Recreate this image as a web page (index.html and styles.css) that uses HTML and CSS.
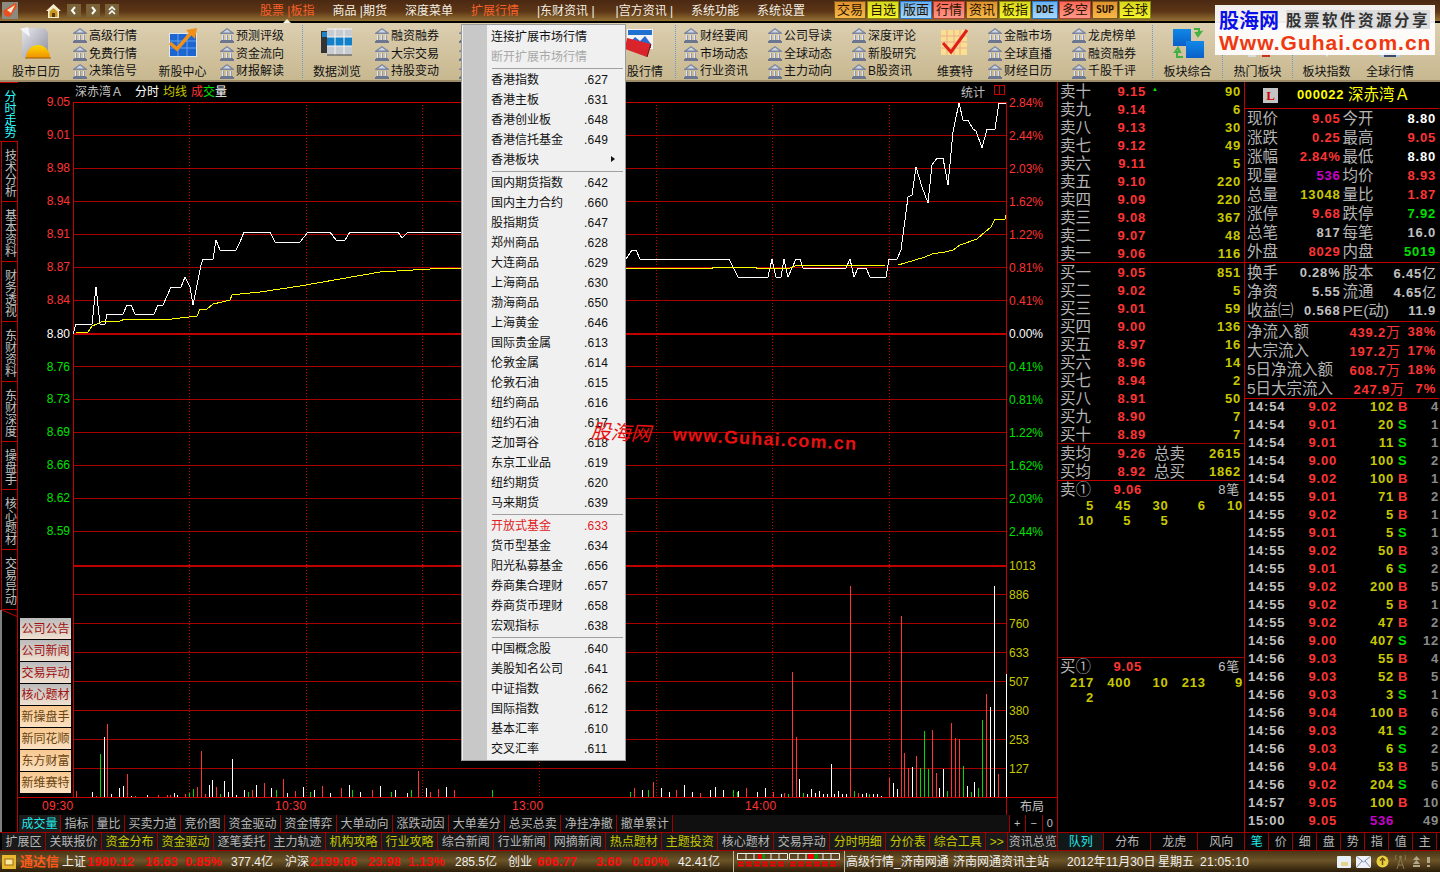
FILE: index.html
```html
<!DOCTYPE html>
<html lang="zh-CN">
<head>
<meta charset="utf-8">
<title>通达信</title>
<link rel="stylesheet" href="styles.css">
</head>
<body>
<svg class="defs" width="0" height="0" aria-hidden="true">
  <symbol id="bank" viewBox="0 0 14 15">
    <path d="M7 0L14 5V6H0V5z" fill="#7c86a0"/>
    <path d="M7 1.500L11 4.500H3z" fill="#cfd6e4"/>
    <path d="M2 7h2v5H2zM6 7h2v5H6zM10 7h2v5h-2z" fill="#8f98ae"/>
    <path d="M2 7h1v5H2zM6 7h1v5H6zM10 7h1v5h-1z" fill="#e2e6ee"/>
    <path d="M1 12h12v1H1zM0 13h14v2H0z" fill="#6c7690"/>
  </symbol>
</svg>
<div class="app">
  <header class="topbar">
    <div class="tb-left">
      <svg class="tb-logo" width="16" height="17" viewBox="0 0 16 17"><rect width="16" height="17" fill="#8a8a80"/><path d="M1 9L13 1L15 4L8 15L3 14z" fill="#e8501c"/><path d="M5 8L13 3L9 11z" fill="#f8e8d0"/></svg>
      <svg class="tb-home" width="15" height="16" viewBox="0 0 15 16"><path d="M7.500 1L15 8H13V15H2V8H0z" fill="#f4ecd0"/><path d="M3.500 8.500L7.500 5L11.500 8.500V14H3.500z" fill="#c89820"/><rect x="6" y="10" width="3" height="4" fill="#5a3a10"/></svg>
      <span class="tb-nav"><svg width="14" height="13" viewBox="0 0 14 13"><path d="M8 3L5 6.500L8 10" fill="none" stroke="#fff" stroke-width="2"/></svg></span>
      <span class="tb-nav"><svg width="14" height="13" viewBox="0 0 14 13"><path d="M6 3L9 6.500L6 10" fill="none" stroke="#fff" stroke-width="2"/></svg></span>
      <span class="tb-nav"><svg width="14" height="13" viewBox="0 0 14 13"><path d="M4 6L7 3L10 6M4 10L7 7L10 10" fill="none" stroke="#fff" stroke-width="1.600"/></svg></span>
    </div>
    <nav class="tb-menu">
      <span class="hot">股票 |板指</span><span>商品 |期货</span><span>深度菜单</span><span class="hot">扩展行情</span><span>|东财资讯 |</span><span class="wide">|宫方资讯 |</span><span>系统功能</span><span>系统设置</span>
    </nav>
    <div class="quick">
      <span class="q amber">交易</span><span class="q yellow">自选</span><span class="q blue">版面</span><span class="q pink">行情</span><span class="q amber">资讯</span><span class="q yellow">板指</span><span class="q blue nar">DDE</span><span class="q pink">多空</span><span class="q amber nar">SUP</span><span class="q yellow">全球</span>
    </div>
  </header>

  <section class="ribbon">
    <div class="big b72">
      <svg width="32" height="32" viewBox="0 0 32 32"><defs><linearGradient id="cal" x1="0" y1="0" x2="1" y2="1"><stop offset="0" stop-color="#e8e8ee"/><stop offset="1" stop-color="#8f8f9c"/></linearGradient><linearGradient id="sun" x1="0" y1="0" x2="0" y2="1"><stop offset="0" stop-color="#ffd800"/><stop offset="1" stop-color="#f09000"/></linearGradient></defs><path d="M2 1H24L28 5V30H2z" fill="url(#cal)"/><path d="M0 2L8 0L10 10z" fill="#f4f4f8"/><path d="M6 31A12 13 0 0 1 30 31z" fill="url(#sun)"/><path d="M5 31H31" stroke="#a05a00"/></svg>
      <span>股市日历</span>
    </div>
    <div class="list b74"><span><svg class="bk"><use href="#bank"/></svg>高级行情</span><span><svg class="bk"><use href="#bank"/></svg>免费行情</span><span><svg class="bk"><use href="#bank"/></svg>决策信号</span></div>
    <div class="big b73">
      <svg width="32" height="32" viewBox="0 0 32 32"><rect x="2" y="6" width="28" height="24" fill="#e6e6e6"/><rect x="3" y="7" width="26" height="22" fill="#1d66d0"/><path d="M3 14H29M3 21H29M11 7V29M20 7V29" stroke="#66a0ee"/><path d="M3 16L10 22L24 6" fill="none" stroke="#f09018" stroke-width="3.500"/><path d="M19 3L30 1L28 12z" fill="#f09018"/></svg>
      <span>新股中心</span>
    </div>
    <div class="list b83"><span><svg class="bk"><use href="#bank"/></svg>预测评级</span><span><svg class="bk"><use href="#bank"/></svg>资金流向</span><span><svg class="bk"><use href="#bank"/></svg>财报解读</span></div>
    <i class="rsep"></i>
    <div class="big b68">
      <svg width="32" height="32" viewBox="0 0 32 32"><rect x="0" y="4" width="14" height="22" fill="#333"/><rect x="1" y="5" width="12" height="5" fill="#2080c8"/><rect x="6" y="2" width="25" height="26" fill="#c8ccd0"/><path d="M6 10H31V19H6z" fill="#1180c8"/><path d="M6 2H31M6 10H31M6 19H31M14 2V28M23 2V28" stroke="#f4f4f4"/><path d="M6 28H31" stroke="#444"/></svg>
      <span>数据浏览</span>
    </div>
    <div class="list b84 push3"><span><svg class="bk"><use href="#bank"/></svg>融资融券</span><span><svg class="bk"><use href="#bank"/></svg>大宗交易</span><span><svg class="bk"><use href="#bank"/></svg>持股变动</span></div>
    <div class="list b145"><span><svg class="bk"><use href="#bank"/></svg></span><span><svg class="bk"><use href="#bank"/></svg></span><span><svg class="bk"><use href="#bank"/></svg></span></div>
    <div class="big b72">
      <svg width="32" height="32" viewBox="0 0 32 32"><rect x="4" y="2" width="26" height="20" fill="#f4f4f4"/><rect x="5" y="3" width="24" height="5" fill="#2070d0"/><path d="M5 18L12 10L17 14L22 9L28 17V21H5z" fill="#2a6ad0"/><path d="M4 11L28 17L24 30L2 22z" fill="#d8242a"/><path d="M28 17L24 30" stroke="#6a1010"/></svg>
      <span class="clip-l">股行情</span>
    </div>
    <i class="rsep"></i>
    <div class="list b84 push7"><span><svg class="bk"><use href="#bank"/></svg>财经要闻</span><span><svg class="bk"><use href="#bank"/></svg>市场动态</span><span><svg class="bk"><use href="#bank"/></svg>行业资讯</span></div>
    <div class="list b84"><span><svg class="bk"><use href="#bank"/></svg>公司导读</span><span><svg class="bk"><use href="#bank"/></svg>全球动态</span><span><svg class="bk"><use href="#bank"/></svg>主力动向</span></div>
    <div class="list b84"><span><svg class="bk"><use href="#bank"/></svg>深度评论</span><span><svg class="bk"><use href="#bank"/></svg>新股研究</span><span><svg class="bk"><use href="#bank"/></svg>B股资讯</span></div>
    <div class="big b40">
      <svg width="30" height="32" viewBox="0 0 30 32"><rect x="1" y="3" width="26" height="25" fill="#f8e090"/><path d="M1 9H27M1 15H27M1 21H27M7 3V28M14 3V28M20 3V28" stroke="#f0a890"/><path d="M3 16L11 25L27 3" fill="none" stroke="#e02018" stroke-width="3"/></svg>
      <span>维赛特</span>
    </div>
    <div class="list b84 push12"><span><svg class="bk"><use href="#bank"/></svg>金融市场</span><span><svg class="bk"><use href="#bank"/></svg>全球直播</span><span><svg class="bk"><use href="#bank"/></svg>财经日历</span></div>
    <div class="list b81"><span><svg class="bk"><use href="#bank"/></svg>龙虎榜单</span><span><svg class="bk"><use href="#bank"/></svg>融资融券</span><span><svg class="bk"><use href="#bank"/></svg>千股千评</span></div>
    <i class="rsep"></i>
    <div class="big b69">
      <svg width="32" height="32" viewBox="0 0 32 32"><defs><linearGradient id="sq" x1="0" y1="0" x2="0" y2="1"><stop offset="0" stop-color="#1088e8"/><stop offset="1" stop-color="#0a60c8"/></linearGradient></defs><rect x="1" y="2" width="18" height="17" fill="url(#sq)"/><rect x="14" y="14" width="18" height="17" fill="url(#sq)"/><path d="M22 2H27V6M29 5L26 9L24 6zM11 30H5V24M3 25L6 21L8 25z" fill="none" stroke="#40b040" stroke-width="2"/></svg>
      <span>板块综合</span>
    </div>
    <i class="rsep"></i>
    <div class="big b69">
      <svg width="32" height="32" viewBox="0 0 32 32"><rect x="6" y="24" width="8" height="6" fill="#dcdcdc"/><rect x="20" y="24" width="8" height="6" fill="#c83020"/></svg>
      <span>热门板块</span>
    </div>
    <i class="rsep"></i>
    <div class="big b67">
      <svg width="32" height="32" viewBox="0 0 32 32"><path d="M12 24H20L16 30z" fill="#e0e4ec"/></svg>
      <span>板块指数</span>
    </div>
    <div class="big b60">
      <svg width="32" height="32" viewBox="0 0 32 32"><path d="M6 24H26V30H6z" fill="#b8d0e4"/><path d="M10 26H22V30H10z" fill="#3a4a68"/></svg>
      <span>全球行情</span>
    </div>
  </section>

  <main class="main">
    <aside class="rail">
      <div class="vt on h60"><span>分时走势</span></div>
      <div class="vt h60"><span>技术分析</span></div>
      <div class="vt h60"><span>基本资料</span></div>
      <div class="vt h60"><span>财务透视</span></div>
      <div class="vt h60"><span>东财资料</span></div>
      <div class="vt h60"><span>东财深度</span></div>
      <div class="vt h48"><span>操盘手</span></div>
      <div class="vt h60"><span>核心题材</span></div>
      <div class="vt h60"><span>交易异动</span></div>
      <div class="rail-rest"><svg width="16" height="8" viewBox="0 0 16 8"><path d="M0 0L16 7" stroke="#c00000"/></svg></div>
    </aside>

    <section class="chartcol">
      <svg class="chart" viewBox="18 82 1040 733" width="1040" height="733">
        <g class="grid">
          <path d="M73 135.500H1006M73 168.500H1006M73 201.500H1006M73 234.500H1006M73 267.500H1006M73 300.500H1006M73 366.500H1006M73 399.500H1006M73 432.500H1006M73 465.500H1006M73 498.500H1006M73 531.500H1006M73 594.500H1006M73 623.500H1006M73 652.500H1006M73 681.500H1006M73 710.500H1006M73 739.500H1006M73 768.500H1006"/>
          <path class="bright" d="M73 102.500H1006M18 797.500H1057M18 815H1057M73.500 102V797M1006.500 102V815"/>
          <path class="thick" d="M73 333.500H1006M73 565.500H1006"/>
          <path class="dots" d="M189.500 102V797M306.500 102V797M422.500 102V797M539.500 102V797M656.500 102V797M772.500 102V797M889.500 102V797"/>
        </g>
        <polyline class="pline" points="73,334 76,324 92,324 96,287 100,324 105,324 107,314 123,314 127,305 131,305 135,314 154,314 158,305 163,305 171,287 181,287 185,277 190,287 193,305 201,265 203,259 213,259 216,240 220,250 236,250 240,242 244,232 270,232 275,242 300,242 308,232 330,232 336,240 345,240 350,232 398,232 402,238 408,232 462,232"/>
        <polyline class="pline" points="626,259 632,250 636,250 640,259 729,259 738,277 768,277 772,259 776,277 781,277 784,259 788,277 796,259 800,259 803,268 846,268 850,259 854,277 858,268 866,268 870,277 886,277 889,259 897,259 901,250 903,235 908,197 912,195 916,167 922,187 928,203 932,165 937,158 943,158 948,185 953,132 959,103 963,120 968,120 973,129 976,131 982,148 987,129 995,129 999,103 1006,103"/>
        <polyline class="aline" points="76,332 88,332 92,326 97,324 101,322 120,321 125,319 172,319 197,316 200,309 207,309 213,304 222,302 230,300 232,295 240,294 260,292 300,286 340,279 380,272 430,269 462,268"/>
        <polyline class="aline" points="626,268 712,268 712,267 756,267 756,268 790,268 795,266 886,265 898,265 905,263 915,260 925,257 932,254 945,252 953,250 960,245 977,239 985,232 991,227 995,219 1005,219 1006,215"/>
        <g transform="translate(.5,0)">
          <path class="vr" d="M76 797V791M96 797V796M107 797V724M127 797V774M158 797V795M167 797V795M170 797V795M185 797V794M197 797V787M201 797V751M205 797V794M216 797V787M252 797V790M264 797V783M283 797V779M295 797V791M322 797V786M341 797V788M372 797V790M418 797V771M430 797V792M438 797V789M454 797V790M634 797V788M653 797V782M676 797V790M700 797V793M746 797V788M773 797V792M784 797V793M792 797V672M796 797V737M850 797V586M858 797V793M889 797V778M901 797V616M904 797V753M908 797V768M916 797V756M932 797V730M936 797V773M951 797V723M955 797V738M959 797V739M986 797V694M998 797V774"/>
          <path class="vw" d="M92 797V792M104 797V737M111 797V794M119 797V788M123 797V786M131 797V796M147 797V795M174 797V793M177 797V795M209 797V785M212 797V780M224 797V781M228 797V792M232 797V759M236 797V795M244 797V790M256 797V785M271 797V788M287 797V793M303 797V787M314 797V790M330 797V793M349 797V785M360 797V792M380 797V786M395 797V790M407 797V793M426 797V788M446 797V787M642 797V790M661 797V788M669 797V792M684 797V785M692 797V792M710 797V790M715 797V787M723 797V790M738 797V791M757 797V792M765 797V788M781 797V794M799 797V779M807 797V794M811 797V789M815 797V793M819 797V791M823 797V794M827 797V794M831 797V764M834 797V794M838 797V791M842 797V794M846 797V794M862 797V794M866 797V793M873 797V794M877 797V794M881 797V796M893 797V783M897 797V789M912 797V767M939 797V788M943 797V769M967 797V786M974 797V782M990 797V707M994 797V586M1006 797V674"/>
          <path class="vg" d="M100 797V754M135 797V796M189 797V793M193 797V789M220 797V794M248 797V792M276 797V790M310 797V792M352 797V790M391 797V792M411 797V790M492 797V790M630 797V792M648 797V790M733 797V790M737 797V792M788 797V794M803 797V793M854 797V791M869 797V794M920 797V768M924 797V731M928 797V769M947 797V791M963 797V766M971 797V792M978 797V788M982 797V720"/>
        </g>
        <g class="ax red">
          <text x="70" y="106">9.05</text><text x="70" y="139">9.01</text><text x="70" y="172">8.98</text><text x="70" y="205">8.94</text><text x="70" y="238">8.91</text><text x="70" y="271">8.87</text><text x="70" y="304">8.84</text>
        </g>
        <text class="ax white" x="70" y="338">8.80</text>
        <g class="ax green">
          <text x="70" y="371">8.76</text><text x="70" y="403">8.73</text><text x="70" y="436">8.69</text><text x="70" y="469">8.66</text><text x="70" y="502">8.62</text><text x="70" y="535">8.59</text>
        </g>
        <g class="axr red">
          <text x="1009" y="107">2.84%</text><text x="1009" y="140">2.44%</text><text x="1009" y="173">2.03%</text><text x="1009" y="206">1.62%</text><text x="1009" y="239">1.22%</text><text x="1009" y="272">0.81%</text><text x="1009" y="305">0.41%</text>
        </g>
        <text class="axr white" x="1009" y="338">0.00%</text>
        <g class="axr green">
          <text x="1009" y="371">0.41%</text><text x="1009" y="404">0.81%</text><text x="1009" y="437">1.22%</text><text x="1009" y="470">1.62%</text><text x="1009" y="503">2.03%</text><text x="1009" y="536">2.44%</text>
        </g>
        <g class="axr yel">
          <text x="1009" y="570">1013</text><text x="1009" y="599">886</text><text x="1009" y="628">760</text><text x="1009" y="657">633</text><text x="1009" y="686">507</text><text x="1009" y="715">380</text><text x="1009" y="744">253</text><text x="1009" y="773">127</text>
        </g>
        <g class="axt red">
          <text x="42" y="810">09:30</text><text x="275" y="810">10:30</text><text x="512" y="810">13:00</text><text x="745" y="810">14:00</text>
        </g>
        <text class="zh grey" x="75" y="96">深赤湾Ａ</text>
        <text class="zh white" x="135" y="96">分时</text>
        <text class="zh yel" x="163" y="96">均线</text>
        <text class="zh red" x="191" y="96">成</text>
        <text class="zh green" x="203" y="96">交</text>
        <text class="zh white" x="215" y="96">量</text>
        <text class="zh grey" x="961" y="97">统计</text>
        <path class="bright" d="M994.500 85.500H1004.500V94.500H994.500zM999.500 85V95"/>
        <text class="zh grey" x="1020" y="811">布局</text>
      </svg>
      <div class="side-btns">
        <span class="sb cool">公司公告</span><span class="sb cool">公司新闻</span><span class="sb cool">交易异动</span><span class="sb cool">核心题材</span>
        <span class="sb warm">新操盘手</span><span class="sb warm">新同花顺</span><span class="sb warm">东方财富</span><span class="sb warm">新维赛特</span>
      </div>
      <div class="tabs1">
        <span class="tab act first">成交量</span><span class="tab">指标</span><span class="tab">量比</span><span class="tab">买卖力道</span><span class="tab">竞价图</span><span class="tab">资金驱动</span><span class="tab">资金博弈</span><span class="tab">大单动向</span><span class="tab">涨跌动因</span><span class="tab">大单差分</span><span class="tab">总买总卖</span><span class="tab">净挂净撤</span><span class="tab">撤单累计</span>
        <span class="tabs-gap"></span>
        <span class="mini">+</span><span class="mini">−</span><span class="mini">0</span>
      </div>
    </section>

    <section class="book">
      <div class="brow"><span class="lb">卖十</span><span class="n red">9.15</span><span class="up">▲</span><span class="n yel">90</span></div>
      <div class="brow"><span class="lb">卖九</span><span class="n red">9.14</span><span></span><span class="n yel">6</span></div>
      <div class="brow"><span class="lb">卖八</span><span class="n red">9.13</span><span></span><span class="n yel">30</span></div>
      <div class="brow"><span class="lb">卖七</span><span class="n red">9.12</span><span></span><span class="n yel">49</span></div>
      <div class="brow"><span class="lb">卖六</span><span class="n red">9.11</span><span></span><span class="n yel">5</span></div>
      <div class="brow"><span class="lb">卖五</span><span class="n red">9.10</span><span></span><span class="n yel">220</span></div>
      <div class="brow"><span class="lb">卖四</span><span class="n red">9.09</span><span></span><span class="n yel">220</span></div>
      <div class="brow"><span class="lb">卖三</span><span class="n red">9.08</span><span></span><span class="n yel">367</span></div>
      <div class="brow"><span class="lb">卖二</span><span class="n red">9.07</span><span></span><span class="n yel">48</span></div>
      <div class="brow"><span class="lb">卖一</span><span class="n red">9.06</span><span></span><span class="n yel">116</span></div>
      <div class="hr"></div>
      <div class="brow"><span class="lb">买一</span><span class="n red">9.05</span><span></span><span class="n yel">851</span></div>
      <div class="brow"><span class="lb">买二</span><span class="n red">9.02</span><span></span><span class="n yel">5</span></div>
      <div class="brow"><span class="lb">买三</span><span class="n red">9.01</span><span></span><span class="n yel">59</span></div>
      <div class="brow"><span class="lb">买四</span><span class="n red">9.00</span><span></span><span class="n yel">136</span></div>
      <div class="brow"><span class="lb">买五</span><span class="n red">8.97</span><span></span><span class="n yel">16</span></div>
      <div class="brow"><span class="lb">买六</span><span class="n red">8.96</span><span></span><span class="n yel">14</span></div>
      <div class="brow"><span class="lb">买七</span><span class="n red">8.94</span><span></span><span class="n yel">2</span></div>
      <div class="brow"><span class="lb">买八</span><span class="n red">8.91</span><span></span><span class="n yel">50</span></div>
      <div class="brow"><span class="lb">买九</span><span class="n red">8.90</span><span></span><span class="n yel">7</span></div>
      <div class="brow"><span class="lb">买十</span><span class="n red">8.89</span><span></span><span class="n yel">7</span></div>
      <div class="hr grey-hr"></div>
      <div class="avg"><span class="lb">卖均</span><span class="n red">9.26</span><span class="lb">总卖</span><span class="n yel">2615</span></div>
      <div class="avg"><span class="lb">买均</span><span class="n red">8.92</span><span class="lb">总买</span><span class="n yel">1862</span></div>
      <div class="hr"></div>
      <div class="qhead"><span class="lb">卖①</span><span class="n red">9.06</span><span class="n grey cnt">8笔</span></div>
      <div class="queue">
        <span class="n yel">5</span><span class="n yel">45</span><span class="n yel">30</span><span class="n yel">6</span><span class="n yel">10</span>
        <span class="n yel">10</span><span class="n yel">5</span><span class="n yel">5</span>
      </div>
      <div class="qspace"></div>
      <div class="hr grey-hr"></div>
      <div class="qhead"><span class="lb">买①</span><span class="n red">9.05</span><span class="n grey cnt">6笔</span></div>
      <div class="queue">
        <span class="n yel">217</span><span class="n yel">400</span><span class="n yel">10</span><span class="n yel">213</span><span class="n yel">9</span>
        <span class="n yel">2</span>
      </div>
    </section>

    <section class="info">
      <div class="ihead"><span class="lbox">L</span><span class="n code">000022</span><span class="iname">深赤湾Ａ</span></div>
      <div class="irow"><div class="half"><span class="lb">现价</span><span class="n red">9.05</span></div><div class="half"><span class="lb">今开</span><span class="n white">8.80</span></div></div>
      <div class="irow"><div class="half"><span class="lb">涨跌</span><span class="n red">0.25</span></div><div class="half"><span class="lb">最高</span><span class="n red">9.05</span></div></div>
      <div class="irow"><div class="half"><span class="lb">涨幅</span><span class="n red">2.84%</span></div><div class="half"><span class="lb">最低</span><span class="n white">8.80</span></div></div>
      <div class="irow"><div class="half"><span class="lb">现量</span><span class="n mag">536</span></div><div class="half"><span class="lb">均价</span><span class="n red">8.93</span></div></div>
      <div class="irow"><div class="half"><span class="lb">总量</span><span class="n yel">13048</span></div><div class="half"><span class="lb">量比</span><span class="n red">1.87</span></div></div>
      <div class="irow"><div class="half"><span class="lb">涨停</span><span class="n red">9.68</span></div><div class="half"><span class="lb">跌停</span><span class="n green">7.92</span></div></div>
      <div class="irow"><div class="half"><span class="lb">总笔</span><span class="n grey">817</span></div><div class="half"><span class="lb">每笔</span><span class="n grey">16.0</span></div></div>
      <div class="irow"><div class="half"><span class="lb">外盘</span><span class="n red">8029</span></div><div class="half"><span class="lb">内盘</span><span class="n green">5019</span></div></div>
      <div class="hr gap1"></div>
      <div class="irow"><div class="half"><span class="lb">换手</span><span class="n grey">0.28%</span></div><div class="half"><span class="lb">股本</span><span class="n grey">6.45<i class="u">亿</i></span></div></div>
      <div class="irow"><div class="half"><span class="lb">净资</span><span class="n grey">5.55</span></div><div class="half"><span class="lb">流通</span><span class="n grey">4.65<i class="u">亿</i></span></div></div>
      <div class="irow"><div class="half"><span class="lb">收益㈢</span><span class="n grey">0.568</span></div><div class="half"><span class="lb">PE(动)</span><span class="n grey">11.9</span></div></div>
      <div class="hr gap1"></div>
      <div class="frow"><span class="lb">净流入额</span><span class="n red fv">439.2<i class="u">万</i></span><span class="n red fp">38%</span></div>
      <div class="frow"><span class="lb">大宗流入</span><span class="n red fv">197.2<i class="u">万</i></span><span class="n red fp">17%</span></div>
      <div class="frow"><span class="lb">5日净流入额</span><span class="n red fv">608.7<i class="u">万</i></span><span class="n red fp">18%</span></div>
      <div class="frow"><span class="lb">5日大宗流入</span><span class="n red fv nudge">247.9<i class="u">万</i></span><span class="n red fp">7%</span></div>
      <div class="hr"></div>
      <div class="ticks">
        <div class="tick"><span class="n grey">14:54</span><span class="n red">9.02</span><span class="n yel">102</span><span class="n red bs">B</span><span class="n dim">4</span></div>
        <div class="tick"><span class="n grey">14:54</span><span class="n red">9.01</span><span class="n yel">20</span><span class="n green bs">S</span><span class="n dim">1</span></div>
        <div class="tick"><span class="n grey">14:54</span><span class="n red">9.01</span><span class="n yel">11</span><span class="n green bs">S</span><span class="n dim">1</span></div>
        <div class="tick"><span class="n grey">14:54</span><span class="n red">9.00</span><span class="n yel">100</span><span class="n green bs">S</span><span class="n dim">2</span></div>
        <div class="tick"><span class="n grey">14:54</span><span class="n red">9.02</span><span class="n yel">100</span><span class="n red bs">B</span><span class="n dim">1</span></div>
        <div class="tick"><span class="n grey">14:55</span><span class="n red">9.01</span><span class="n yel">71</span><span class="n red bs">B</span><span class="n dim">2</span></div>
        <div class="tick"><span class="n grey">14:55</span><span class="n red">9.02</span><span class="n yel">5</span><span class="n red bs">B</span><span class="n dim">1</span></div>
        <div class="tick"><span class="n grey">14:55</span><span class="n red">9.01</span><span class="n yel">5</span><span class="n green bs">S</span><span class="n dim">1</span></div>
        <div class="tick"><span class="n grey">14:55</span><span class="n red">9.02</span><span class="n yel">50</span><span class="n red bs">B</span><span class="n dim">3</span></div>
        <div class="tick"><span class="n grey">14:55</span><span class="n red">9.01</span><span class="n yel">6</span><span class="n green bs">S</span><span class="n dim">2</span></div>
        <div class="tick"><span class="n grey">14:55</span><span class="n red">9.02</span><span class="n yel">200</span><span class="n red bs">B</span><span class="n dim">5</span></div>
        <div class="tick"><span class="n grey">14:55</span><span class="n red">9.02</span><span class="n yel">5</span><span class="n red bs">B</span><span class="n dim">1</span></div>
        <div class="tick"><span class="n grey">14:55</span><span class="n red">9.02</span><span class="n yel">47</span><span class="n red bs">B</span><span class="n dim">2</span></div>
        <div class="tick"><span class="n grey">14:56</span><span class="n red">9.00</span><span class="n yel">407</span><span class="n green bs">S</span><span class="n dim">12</span></div>
        <div class="tick"><span class="n grey">14:56</span><span class="n red">9.03</span><span class="n yel">55</span><span class="n red bs">B</span><span class="n dim">4</span></div>
        <div class="tick"><span class="n grey">14:56</span><span class="n red">9.03</span><span class="n yel">52</span><span class="n red bs">B</span><span class="n dim">5</span></div>
        <div class="tick"><span class="n grey">14:56</span><span class="n red">9.03</span><span class="n yel">3</span><span class="n green bs">S</span><span class="n dim">1</span></div>
        <div class="tick"><span class="n grey">14:56</span><span class="n red">9.04</span><span class="n yel">100</span><span class="n red bs">B</span><span class="n dim">6</span></div>
        <div class="tick"><span class="n grey">14:56</span><span class="n red">9.03</span><span class="n yel">41</span><span class="n green bs">S</span><span class="n dim">2</span></div>
        <div class="tick"><span class="n grey">14:56</span><span class="n red">9.03</span><span class="n yel">6</span><span class="n green bs">S</span><span class="n dim">2</span></div>
        <div class="tick"><span class="n grey">14:56</span><span class="n red">9.04</span><span class="n yel">53</span><span class="n red bs">B</span><span class="n dim">5</span></div>
        <div class="tick"><span class="n grey">14:56</span><span class="n red">9.02</span><span class="n yel">204</span><span class="n green bs">S</span><span class="n dim">6</span></div>
        <div class="tick"><span class="n grey">14:57</span><span class="n red">9.05</span><span class="n yel">100</span><span class="n red bs">B</span><span class="n dim">10</span></div>
        <div class="tick"><span class="n grey">15:00</span><span class="n red">9.05</span><span class="n mag">536</span><span class="bs"></span><span class="n dim">49</span></div>
      </div>
    </section>
  </main>

  <div class="tabs2">
    <span class="tab t2">扩展区</span><span class="tab t2">关联报价</span><span class="tab t2 gold">资金分布</span><span class="tab t2 gold">资金驱动</span><span class="tab t2">逐笔委托</span><span class="tab t2">主力轨迹</span><span class="tab t2 gold">机构攻略</span><span class="tab t2 gold">行业攻略</span><span class="tab t2">综合新闻</span><span class="tab t2">行业新闻</span><span class="tab t2">网摘新闻</span><span class="tab t2 gold">热点题材</span><span class="tab t2 gold">主题投资</span><span class="tab t2">核心题材</span><span class="tab t2">交易异动</span><span class="tab t2 gold">分时明细</span><span class="tab t2 gold">分价表</span><span class="tab t2 gold">综合工具</span><span class="tab t2 gold tgt">&gt;&gt;</span><span class="tab t2 tall">资讯总览</span>
    <span class="tab t2 tq act2 on2">队列</span><span class="tab t2 tq">分布</span><span class="tab t2 tq">龙虎</span><span class="tab t2 tq">风向</span>
    <span class="tab t2 ts act2">笔</span><span class="tab t2 ts">价</span><span class="tab t2 ts">细</span><span class="tab t2 ts">盘</span><span class="tab t2 ts">势</span><span class="tab t2 ts">指</span><span class="tab t2 ts">值</span><span class="tab t2 ts">主</span>
  </div>

  <footer class="status">
    <span class="st-ico"><svg width="14" height="14" viewBox="0 0 14 14"><rect width="14" height="14" fill="#e8b830"/><rect x="3" y="4" width="8" height="6" fill="#f8e8a0" stroke="#a06810"/></svg></span>
    <b class="brand">通达信</b>
    <span>上证</span><b class="sv">1980.12</b><b class="sv">16.63</b><b class="sv">0.85%</b><span class="sw">377.4亿</span>
    <span>沪深</span><b class="sv">2139.66</b><b class="sv">23.98</b><b class="sv">1.13%</b><span class="sw">285.5亿</span>
    <span>创业</span><b class="sv">606.77</b><b class="sv">3.60</b><b class="sv">0.60%</b><span class="sw">42.41亿</span>
    <span class="meters">
      <svg width="108" height="21" viewBox="0 0 108 21"><path d="M3.500 2.500H53.500V8.500H3.500zM12 2V8M20 2V8M28 2V8M37 2V8M45 2V8M55.500 2.500H105.500V8.500H55.500zM64 2V8M72 2V8M80 2V8M89 2V8M97 2V8" fill="none" stroke="#f0f0f0"/><path d="M24 3H28V8H24zM74 3H80V8H74z" fill="#f00000"/><path d="M28 3H31V8H28zM80 3H84V8H80z" fill="#109010"/><path class="dash" d="M4 11.500H53M56 11.500H105M4 14.500H53M56 14.500H105" stroke="#f00000" stroke-width="2" stroke-dasharray="6 2"/></svg>
    </span>
    <span class="st-a">高级行情_济南网通</span><span>济南网通资讯主站</span><span>2012年11月30日</span><span>星期五</span><span class="st-t">21:05:10</span>
    <span class="st-icons">
      <svg width="14" height="12" viewBox="0 0 14 12"><rect width="14" height="12" rx="1" fill="#e8f0f8"/><path d="M4 7H11M4 9H11" stroke="#e0b820"/></svg>
      <svg width="15" height="12" viewBox="0 0 15 12"><rect width="15" height="12" fill="#eef2f8"/><path d="M0 0L7.500 6L15 0M0 12L6 5M15 12L9 5" fill="none" stroke="#8090a8"/></svg>
      <svg width="13" height="13" viewBox="0 0 13 13"><circle cx="6.500" cy="6.500" r="6" fill="#e8d040"/><path d="M6.500 3V10M4 5.500L6.500 3L9 5.500" fill="none" stroke="#705010" stroke-width="1.500"/></svg>
      <svg width="13" height="16" viewBox="0 0 13 16"><path d="M6.500 4L3 15M6.500 4L10 15M4 11H9" stroke="#8a7a50" fill="none"/><circle cx="6.500" cy="3" r="1.500" fill="#8a7a50"/><path d="M2 1A6 6 0 0 0 2 6M11 1A6 6 0 0 1 11 6" fill="none" stroke="#8a7a50"/></svg>
      <svg width="9" height="12" viewBox="0 0 9 12"><path d="M4.500 0L8 4H1zM4.500 4L8 8H1zM1 9H8V11H1z" fill="#b0a888"/></svg>
      <svg width="5" height="10" viewBox="0 0 5 10"><path d="M1 0H4V6H1zM1 8H4V10H1z" fill="#b0a888"/></svg>
    </span>
  </footer>

  <div class="notch"></div>

  <div class="menu">
    <div class="mi"><span>连接扩展市场行情</span></div>
    <div class="mi off"><span>断开扩展市场行情</span></div>
    <div class="ms"></div>
    <div class="mi"><span>香港指数</span><span class="code-m">.627</span></div>
    <div class="mi"><span>香港主板</span><span class="code-m">.631</span></div>
    <div class="mi"><span>香港创业板</span><span class="code-m">.648</span></div>
    <div class="mi"><span>香港信托基金</span><span class="code-m">.649</span></div>
    <div class="mi"><span>香港板块</span><i class="arrow"></i></div>
    <div class="ms"></div>
    <div class="mi"><span>国内期货指数</span><span class="code-m">.642</span></div>
    <div class="mi"><span>国内主力合约</span><span class="code-m">.660</span></div>
    <div class="mi"><span>股指期货</span><span class="code-m">.647</span></div>
    <div class="mi"><span>郑州商品</span><span class="code-m">.628</span></div>
    <div class="mi"><span>大连商品</span><span class="code-m">.629</span></div>
    <div class="mi"><span>上海商品</span><span class="code-m">.630</span></div>
    <div class="mi"><span>渤海商品</span><span class="code-m">.650</span></div>
    <div class="mi"><span>上海黄金</span><span class="code-m">.646</span></div>
    <div class="mi"><span>国际贵金属</span><span class="code-m">.613</span></div>
    <div class="mi"><span>伦敦金属</span><span class="code-m">.614</span></div>
    <div class="mi"><span>伦敦石油</span><span class="code-m">.615</span></div>
    <div class="mi"><span>纽约商品</span><span class="code-m">.616</span></div>
    <div class="mi"><span>纽约石油</span><span class="code-m">.617</span></div>
    <div class="mi"><span>芝加哥谷</span><span class="code-m">.618</span></div>
    <div class="mi"><span>东京工业品</span><span class="code-m">.619</span></div>
    <div class="mi"><span>纽约期货</span><span class="code-m">.620</span></div>
    <div class="mi"><span>马来期货</span><span class="code-m">.639</span></div>
    <div class="ms"></div>
    <div class="mi redm"><span>开放式基金</span><span class="code-m">.633</span></div>
    <div class="mi"><span>货币型基金</span><span class="code-m">.634</span></div>
    <div class="mi"><span>阳光私募基金</span><span class="code-m">.656</span></div>
    <div class="mi"><span>券商集合理财</span><span class="code-m">.657</span></div>
    <div class="mi"><span>券商货币理财</span><span class="code-m">.658</span></div>
    <div class="mi"><span>宏观指标</span><span class="code-m">.638</span></div>
    <div class="ms"></div>
    <div class="mi"><span>中国概念股</span><span class="code-m">.640</span></div>
    <div class="mi"><span>美股知名公司</span><span class="code-m">.641</span></div>
    <div class="mi"><span>中证指数</span><span class="code-m">.662</span></div>
    <div class="mi"><span>国际指数</span><span class="code-m">.612</span></div>
    <div class="mi"><span>基本汇率</span><span class="code-m">.610</span></div>
    <div class="mi"><span>交叉汇率</span><span class="code-m">.611</span></div>
  </div>

  <div class="logo">
    <div class="logo-top"><span class="logo-cn">股海网</span><span class="logo-sub">股票软件资源分享</span></div>
    <div class="logo-url">Www.Guhai.com.cn</div>
  </div>

  <div class="mark"><span class="mark-cn">股海网</span><span class="mark-url">www.Guhai.com.cn</span></div>
</div>
</body>
</html>
```

FILE: styles.css
```css
* { box-sizing: border-box; }
html, body { margin: 0; padding: 0; background: #000; }
body { width: 1440px; height: 872px; overflow: hidden; font: 12px/1 "Liberation Sans", "Noto Sans CJK SC", sans-serif; color: #c0c0c0; }
i { font-style: normal; }
.defs { position: absolute; }
.app { position: relative; width: 1440px; height: 872px; display: flex; flex-direction: column; }

/* colour helpers */
.red { color: #ff3434; fill: #ff3434; }
.green { color: #00e000; fill: #00e000; }
.white { color: #fff; fill: #fff; }
.yel { color: #c8c800; fill: #c8c800; }
.grey { color: #c0c0c0; fill: #c0c0c0; }
.dim { color: #8a8a8a; }
.mag { color: #c800c8; }

/* top bar */
.topbar { height: 23px; flex: none; display: flex; align-items: center; background: linear-gradient(#4a2812, #5c3616 55%, #947234); border-bottom: 2px solid #000; color: #f4f0e4; }
.tb-left { width: 260px; flex: none; display: flex; align-items: center; height: 21px; padding-left: 2px; }
.tb-home { margin-left: 28px; }
.tb-nav { width: 14px; height: 13px; margin-left: 5px; background: #7a6238; display: flex; }
.tb-home + .tb-nav { margin-left: 6px; }
.tb-menu { width: 574px; flex: none; display: flex; gap: 18px; font-size: 12px; white-space: nowrap; }
.tb-menu .hot { color: #f8602a; }
.tb-menu .wide { margin-left: 3px; }
.quick { display: flex; gap: 1px; height: 18px; margin-top: -2px; }
.q { width: 32px; height: 18px; display: flex; align-items: center; justify-content: center; font-size: 13px; color: #281400; border: 1px solid #7a5a20; }
.q.nar { width: 26px; font: bold 10px/1 "DejaVu Sans Mono", monospace; }
.amber { background: linear-gradient(#e0902c, #f8b848); }
.yellow { background: linear-gradient(#d8d81c, #f4f42c); border-color: #8a8a10; }
.blue { background: linear-gradient(#68b0f0, #a8d8fc); border-color: #2c78c8; }
.pink { background: linear-gradient(#f86858, #ff9888); border-color: #b04030; }

/* ribbon */
.ribbon { height: 59px; flex: none; display: flex; background: linear-gradient(#dccfb0, #c8b890); border-bottom: 2px solid #9c8c68; color: #111; overflow: hidden; }
.big { display: flex; flex-direction: column; align-items: center; flex: none; padding-top: 4px; }
.big svg { height: 32px; }
.big span { margin-top: 6px; line-height: 14px; white-space: nowrap; }
.big .clip-l { padding-left: 12px; }
.list { display: flex; flex-direction: column; flex: none; padding: 4px 0 0 1px; }
.list span { height: 18px; display: flex; align-items: center; gap: 2px; white-space: nowrap; }
.bk { width: 14px; height: 15px; }
.rsep { flex: none; width: 1px; height: 53px; margin-top: 2px; border-left: 1px dotted #6a9cc8; }
.b40 { width: 40px; } .b60 { width: 60px; } .b67 { width: 67px; } .b68 { width: 68px; } .b69 { width: 69px; } .b72 { width: 72px; } .b73 { width: 73px; } .b74 { width: 74px; } .b81 { width: 81px; } .b83 { width: 83px; } .b84 { width: 84px; } .b145 { width: 145px; }
.push3 { margin-left: 3px; } .push7 { margin-left: 7px; } .push12 { margin-left: 12px; }

/* main */
.main { height: 750px; flex: none; display: flex; background: #000; }
.rail { width: 18px; flex: none; display: flex; flex-direction: column; }
.vt { border-left: 1px solid #c00000; border-right: 1px solid #c00000; border-bottom: 1px solid #c00000; margin-left: 1px; display: flex; justify-content: center; padding-top: 7px; overflow: hidden; }
.vt span { writing-mode: vertical-rl; text-orientation: upright; letter-spacing: 0; font-size: 12px; line-height: 14px; color: #c0c0c0; white-space: nowrap; }
.vt.on { border-left: 0; border-right: 0; margin-left: 0; border-top: 1px solid #c00000; }
.vt.on span { color: #30ffff; }
.h60 { height: 60px; } .h48 { height: 48px; }
.rail-rest { flex: 1; border-left: 2px solid #808080; border-right: 1px solid #c00000; }
.rail-rest svg { display: block; }

.chartcol { width: 1040px; flex: none; position: relative; display: flex; flex-direction: column; border-right: 0; }
.chart { display: block; flex: none; }
.grid path { fill: none; stroke: #a80000; stroke-width: 1; shape-rendering: crispEdges; }
.grid .bright, .chart > .bright { fill: none; stroke: #c80000; stroke-width: 1; shape-rendering: crispEdges; }
.grid .thick { stroke: #c00000; stroke-width: 2; }
.grid .dots { stroke-dasharray: 1 2; stroke: #c80000; }
.pline { fill: none; stroke: #fff; stroke-width: 1; shape-rendering: crispEdges; }
.aline { fill: none; stroke: #ffff00; stroke-width: 1; shape-rendering: crispEdges; }
.vr, .vw, .vg { fill: none; stroke-width: 1; shape-rendering: crispEdges; }
.vr { stroke: #ff3434; } .vw { stroke: #fff; } .vg { stroke: #00d800; }
.chart text { font-family: "Liberation Sans", "Noto Sans CJK SC", sans-serif; }
.ax text, text.ax { font-size: 12px; text-anchor: end; }
.axr text, text.axr { font-size: 12px; }
.axt text { font-size: 12px; letter-spacing: .3px; }
.chart .zh { font-size: 12px; }

.side-btns { position: absolute; left: 2px; top: 536px; width: 51px; display: flex; flex-direction: column; gap: 1px; }
.sb { height: 21px; display: flex; align-items: center; justify-content: center; font-size: 12px; }
.cool { background: linear-gradient(#bcbcbc, #f0e0d0); color: #a01010; }
.warm { background: linear-gradient(#f8c890, #fae0c0); color: #6a4410; }

.tabs1 { height: 17px; flex: none; display: flex; }
.tab { flex: none; padding: 0 3.500px; height: 100%; display: flex; align-items: center; justify-content: center; border-right: 1px solid #a00000; background: #0c0c0c; color: #b8b8b8; font-size: 12px; white-space: nowrap; }
.tab.act { color: #20e8e8; background: #1c1c1c; }
.tab.first { margin-left: 1px; padding: 0; width: 42px; }
.tabs-gap { flex: 1; background: #101010; }
.mini { flex: none; width: 16.500px; display: flex; align-items: center; justify-content: center; color: #c0c0c0; border-left: 1px solid #a00000; font-size: 11px; }
.mini:last-child { border-right: 1px solid #c00000; }

/* order book */
.book { width: 188px; flex: none; border-right: 1px solid #c00000; border-left: 1px solid #c00000; margin-left: -1px; display: flex; flex-direction: column; }
.lb { font-size: 15.500px; line-height: 18px; color: #b4b4b4; white-space: nowrap; }
.n { font: bold 13px/18px "Liberation Sans", "Noto Sans CJK SC", sans-serif; letter-spacing: .8px; text-align: right; white-space: nowrap; }
.n .u { font: 14px/18px "Noto Sans CJK SC", sans-serif; letter-spacing: 0; }
.brow { height: 18px; display: grid; grid-template-columns: 36px 50px 16px 79px; padding-left: 2px; flex: none; }
.brow .n, .brow .lb, .avg .n, .avg .lb { line-height: 20px; }
.up { color: #00e000; font-size: 6px; line-height: 14px; padding-left: 6px; }
.hr { height: 1px; flex: none; background: #c00000; }
.gap1 { margin-top: 1px; }
.grey-hr { background: #a00000; }
.avg { height: 18px; display: grid; grid-template-columns: 36px 50px 40px 55px; padding-left: 2px; flex: none; }
.avg .lb:nth-child(3) { padding-left: 8px; }
.qhead { height: 17px; display: grid; grid-template-columns: 36px 46px 1fr; padding: 0 4px 0 2px; flex: none; }
.cnt { font-weight: normal; }
.queue { display: grid; grid-template-columns: 34px repeat(4, 37.250px); padding-left: 2px; grid-auto-rows: 15px; flex: none; width: 187px; }
.queue .n { line-height: 15px; }
.qspace { height: 129px; flex: none; }

/* info */
.info { width: 194px; flex: none; display: flex; flex-direction: column; margin-left: 0; }
.ihead { height: 27px; border-bottom: 1px solid #c00000; display: flex; align-items: center; padding-left: 18px; flex: none; }
.lbox { width: 15px; height: 15px; background: #c4c4c4; color: #d00000; font: bold 13px/15px "Liberation Serif", serif; text-align: center; }
.code { color: #ffff00; margin-left: 19px; letter-spacing: .6px; }
.iname { color: #ffff00; font-size: 15.500px; margin-left: 4px; }
.irow { height: 19px; display: flex; gap: 2px; padding: 0 3px 0 2px; flex: none; }
.half { width: 94px; display: flex; justify-content: space-between; }
.half .lb { line-height: 20px; }
.half .n, .frow .n { line-height: 19px; }
.frow { height: 19px; display: flex; align-items: center; padding: 0 3px 0 2px; flex: none; position: relative; }
.frow .lb { flex: 1; }
.fv { width: 62px; }
.fv.nudge { position: relative; left: 4px; }
.fp { width: 36px; }
.ticks { flex: 1; }
.tick { height: 18px; display: grid; grid-template-columns: 56px 33px 57px 17px 28px; padding-left: 3px; }
.tick .n { line-height: 16px; }
.tick .n:first-child { text-align: left; }
.bs { text-align: left !important; padding-left: 4px; }

/* second tab row */
.tabs2 { height: 19px; flex: none; display: flex; border-top: 1px solid #a00000; border-bottom: 1px solid #a00000; padding-left: 2px; background: #000; }
.t2 { background: #1a1a1a; border-left: 0; }
.gold { color: #c8c800; }
.tgt { width: 22px; padding: 0; }
.tall { width: 50px; padding: 0; }
.tq { width: 47px; padding: 0; background: #060606; }
.ts { width: 24px; padding: 0; background: #060606; }
.tabs2 .tq.act2 { width: 46px; }
.act2 { color: #20e8e8; }
.on2 { background: #101818; }

/* status bar */
.status { height: 21px; flex: 1; display: grid; align-items: center; grid-template-columns: 20px 42px 25px 58px 40px 46px 54px 25px 58px 40px 47px 53px 29px 59px 36px 46px 55px 112px 108px 114px 91px 42px 137px 103px; background: linear-gradient(#4a3414, #6c5428 45%, #2a1c08); color: #f0f0f0; font-size: 12px; white-space: nowrap; overflow: hidden; }
.st-ico { display: flex; padding-left: 2px; }
.brand { color: #ff5a1c; font-size: 13px; }
.sv { color: #ff0a0a; font: bold 12.500px "Liberation Sans", sans-serif; letter-spacing: .3px; }
.sw { color: #f0f0f0; }
.meters { height: 21px; border-left: 1px solid #c0b8a0; border-right: 1px solid #c0b8a0; display: flex; }
.meters svg { display: block; margin-left: 0; }
.st-a { padding-left: 1px; }
.st-t { letter-spacing: .3px; }
.st-icons { display: flex; align-items: center; gap: 5px; }

/* overlays */
.notch { position: absolute; left: 283px; top: 19px; width: 0; height: 0; border: 4px solid transparent; border-top: 0; border-bottom: 4px solid #f4f0e0; }

.menu { position: absolute; left: 461px; top: 24px; width: 165px; height: 737px; padding-top: 2px; border: 1px solid #9a9a9a; background: linear-gradient(to right, #f0f0f0 1px, #c8c8c8 1px, #c8c8c8 25px, #f0f0f0 25px); color: #111; }
.mi { height: 20px; display: flex; align-items: center; padding-left: 29px; position: relative; font-size: 12px; white-space: nowrap; }
.off { color: #a8a8a8; }
.redm { color: #e02020; }
.code-m { position: absolute; left: 122px; letter-spacing: .2px; }
.ms { height: 1px; margin: 1px 2px 1px 30px; background: #a0a0a0; }
.arrow { position: absolute; left: 149px; top: 6px; border-left: 4px solid #111; border-top: 3.500px solid transparent; border-bottom: 3.500px solid transparent; }

.logo { position: absolute; left: 1215px; top: 5px; width: 220px; height: 50px; background: rgba(255,255,255,.92); padding: 3px 0 0 4px; }
.logo-top { display: flex; align-items: center; height: 23px; }
.logo-cn { color: #0a10e8; font: bold 20px/24px "Noto Sans CJK SC", sans-serif; width: 67px; }
.logo-sub { color: #333; font: bold 15.500px/18px "Noto Sans CJK SC", sans-serif; letter-spacing: 2.500px; background: #dcdcdc; white-space: nowrap; height: 19px; }
.logo-url { color: #f03810; font: bold 21px/23px "Liberation Sans", sans-serif; letter-spacing: 1px; white-space: nowrap; }

.mark { position: absolute; left: 591px; top: 417px; display: flex; align-items: center; transform: rotate(3deg); transform-origin: left center; color: #e81010; white-space: nowrap; }
.mark-cn { font: italic 20px/26px "Noto Sans CJK SC", sans-serif; width: 82px; }
.mark-url { font: bold 18px/26px "Liberation Sans", sans-serif; letter-spacing: 1.200px; }
```
